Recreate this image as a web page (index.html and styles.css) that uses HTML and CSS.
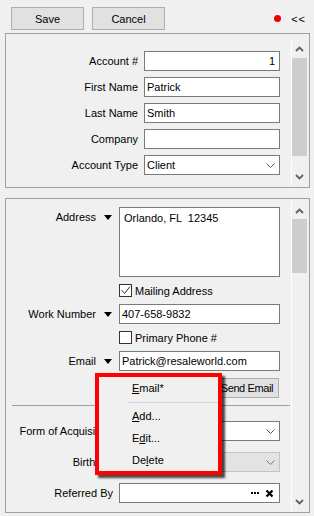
FILE: index.html
```html
<html lang="en">

<head>
    <meta charset="UTF-8">
    <meta name="viewport" content="width=device-width, initial-scale=1.0">
    <title>Account</title>
    <link rel="stylesheet" href="styles.css">
</head>

<body>
    <div class="toolbar">
        <button class="btn">Save</button>
        <button class="btn">Cancel</button>
        <div class="status">
            <span class="dot"></span>
            <span class="collapse">&lt;&lt;</span>
        </div>
    </div>

    <div class="panel panel-top">
        <div class="fields">
            <label>Account #</label>
            <div class="input num">1</div>
            <label>First Name</label>
            <div class="input">Patrick</div>
            <label>Last Name</label>
            <div class="input">Smith</div>
            <label>Company</label>
            <div class="input"></div>
            <label>Account Type</label>
            <div class="input select"><span>Client</span><svg class="chev" width="9" height="5" viewBox="0 0 9 5"><polyline points="0.5,0.5 4.5,4.5 8.5,0.5" fill="none" stroke="#555" stroke-width="1"/></svg></div>
        </div>
        <div class="vscroll vscroll-top">
            <div class="sb-btn"><svg width="9" height="6" viewBox="0 0 9 6"><polyline points="1,5 4.5,1.5 8,5" fill="none" stroke="#606060" stroke-width="1.8"/></svg></div>
            <div class="sb-track"><div class="sb-thumb"></div></div>
            <div class="sb-btn"><svg width="9" height="6" viewBox="0 0 9 6"><polyline points="1,1 4.5,4.5 8,1" fill="none" stroke="#606060" stroke-width="1.8"/></svg></div>
        </div>
    </div>

    <div class="panel panel-bottom">
        <div class="form">
            <div class="upper">
                <label class="top">Address</label>
                <span class="tri top"></span>
                <div class="input area">Orlando, FL  12345</div>

                <div class="check"><span class="box checked"><svg width="11" height="11" viewBox="0 0 11 11"><polyline points="1.5,5 4.5,8.5 10,1.5" fill="none" stroke="#333" stroke-width="1"/></svg></span>Mailing Address</div>

                <label>Work Number</label>
                <span class="tri"></span>
                <div class="input">407-658-9832</div>

                <div class="check"><span class="box"></span>Primary Phone #</div>

                <label>Email</label>
                <span class="tri"></span>
                <div class="input">Patrick@resaleworld.com</div>

                <button class="send">Send Email</button>
            </div>

            <div class="sep"></div>

            <div class="lower">
                <label>Form of Acquisition</label>
                <div class="input select"><svg class="chev" width="9" height="5" viewBox="0 0 9 5"><polyline points="0.5,0.5 4.5,4.5 8.5,0.5" fill="none" stroke="#555" stroke-width="1"/></svg></div>
                <label>Birthday</label>
                <div class="input select disabled"><svg class="chev" width="9" height="5" viewBox="0 0 9 5"><polyline points="0.5,0.5 4.5,4.5 8.5,0.5" fill="none" stroke="#777" stroke-width="1"/></svg></div>
                <label>Referred By</label>
                <div class="input lookup">
                    <span class="dots"><i></i><i></i><i></i></span>
                    <svg width="9" height="9" viewBox="0 0 9 9"><path d="M1.5 1.5 L7.5 7.5 M7.5 1.5 L1.5 7.5" stroke="#000" stroke-width="2.2"/></svg>
                </div>
            </div>
        </div>
        <div class="vscroll vscroll-bottom">
            <div class="sb-btn"><svg width="9" height="6" viewBox="0 0 9 6"><polyline points="1,5 4.5,1.5 8,5" fill="none" stroke="#606060" stroke-width="1.8"/></svg></div>
            <div class="sb-track"><div class="sb-thumb"></div></div>
            <div class="sb-btn"><svg width="9" height="6" viewBox="0 0 9 6"><polyline points="1,1 4.5,4.5 8,1" fill="none" stroke="#606060" stroke-width="1.8"/></svg></div>
        </div>
    </div>

    <div class="menu">
        <div class="menu-item"><u>E</u>mail*</div>
        <div class="menu-sep"></div>
        <div class="menu-item"><u>A</u>dd...</div>
        <div class="menu-item">E<u>d</u>it...</div>
        <div class="menu-item">De<u>l</u>ete</div>
    </div>
</body>

</html>
```

FILE: styles.css
```css
body {
    margin: 0;
    width: 314px;
    height: 516px;
    overflow: hidden;
    position: relative;
    background: #f0f0f0;
    font-family: "Liberation Sans", Arial, sans-serif;
    font-size: 11px;
    color: #000;
}

.toolbar {
    height: 33px;
    box-sizing: border-box;
    display: flex;
    align-items: flex-start;
    gap: 8px;
    padding: 7px 8px 0 11px;
}

.btn {
    width: 73px;
    height: 23px;
    background: #e1e1e1;
    border: 1px solid #adadad;
    font-family: inherit;
    font-size: 11px;
    color: #000;
    padding: 0;
}

.status {
    margin-left: auto;
    height: 23px;
    display: flex;
    align-items: center;
    gap: 10px;
}

.dot {
    width: 7px;
    height: 7px;
    border-radius: 50%;
    background: #f00000;
}

.collapse {
    font-size: 11px;
    letter-spacing: 1px;
}

.panel {
    margin: 0 4px 0 5px;
    border: 1px solid #a0a0a0;
    box-sizing: border-box;
    display: flex;
}

.panel-top {
    height: 155px;
}

.panel-bottom {
    height: 315px;
    margin-top: 10px;
}

.fields {
    display: grid;
    grid-template-columns: 132px 136px;
    grid-auto-rows: 20px;
    column-gap: 6px;
    row-gap: 6px;
    padding-top: 17px;
    align-content: start;
}

label {
    text-align: right;
    line-height: 20px;
    white-space: nowrap;
}

.input {
    height: 20px;
    box-sizing: border-box;
    border: 1px solid #7a7a7a;
    background: #fff;
    padding: 0 2px;
    line-height: 18px;
    position: relative;
    white-space: pre;
    overflow: hidden;
}

.num {
    text-align: right;
    padding-right: 4px;
}

.select {
    white-space: nowrap;
}

.select .chev {
    position: absolute;
    right: 4px;
    top: 7px;
}

.disabled {
    background: #e3e3e3;
    border-color: #c4c4c4;
}

.vscroll {
    width: 18px;
    box-sizing: border-box;
    border-left: 1px solid #fff;
    margin-left: auto;
    display: flex;
    flex-direction: column;
}

.vscroll-top {
    margin-top: 6px;
    height: 145px;
}

.vscroll-bottom {
    margin-top: 3px;
    height: 308px;
}

.sb-btn {
    height: 17px;
    width: 15px;
    display: flex;
    align-items: center;
    justify-content: center;
}

.sb-track {
    flex: 1;
}

.sb-thumb {
    width: 15px;
    background: #cdcdcd;
}

.vscroll-top .sb-thumb {
    margin-top: 1px;
    height: 98px;
}

.vscroll-bottom .sb-thumb {
    height: 54px;
}

.form {
    width: 284px;
}

.upper {
    display: grid;
    grid-template-columns: 90px 23px 161px;
    row-gap: 7px;
    padding-top: 8px;
}

.upper label {
    grid-column: 1;
}

.tri {
    grid-column: 2;
    align-self: center;
    margin-left: 8px;
    width: 0;
    height: 0;
    border-left: 4.5px solid transparent;
    border-right: 4.5px solid transparent;
    border-top: 5px solid #000;
}

.upper .top {
    align-self: start;
}

.tri.top {
    margin-top: 8px;
}

.upper .input {
    grid-column: 3;
}

.area {
    height: 70px;
    padding: 3px 4px;
    line-height: 14px;
}

.check {
    grid-column: 3;
    height: 13px;
    display: flex;
    align-items: center;
    gap: 3px;
}

.box {
    width: 13px;
    height: 13px;
    box-sizing: border-box;
    border: 1px solid #333;
    background: #fff;
    display: flex;
    align-items: center;
    justify-content: center;
}

.send {
    grid-column: 3;
    justify-self: end;
    margin-right: 1px;
    height: 20px;
    padding: 0 5px 0 10px;
    letter-spacing: -0.4px;
    background: #e1e1e1;
    border: 1px solid #adadad;
    font-family: inherit;
    font-size: 11px;
    color: #000;
}

.sep {
    border-top: 1px solid #a0a0a0;
    margin: 7px 0 15px 6px;
}

.lower {
    display: grid;
    grid-template-columns: 107px 161px;
    grid-auto-rows: 20px;
    column-gap: 6px;
    row-gap: 11px;
}

.lookup {
    display: flex;
    align-items: center;
    justify-content: flex-end;
    gap: 6px;
    padding-right: 5px;
}

.dots {
    display: flex;
    gap: 1px;
}

.dots i {
    width: 2px;
    height: 2px;
    background: #000;
}

.menu {
    position: absolute;
    left: 95px;
    top: 373px;
    width: 127px;
    height: 102px;
    box-sizing: border-box;
    border: 4px solid #f00;
    background: #f0f0f0;
    box-shadow: 3px 3px 2px rgba(0, 0, 0, 0.7);
}

.menu-item {
    height: 22px;
    line-height: 22px;
    padding-left: 33px;
}

.menu-sep {
    height: 1px;
    background: #d7d7d7;
    margin: 3px 0 2px 29px;
}
```
